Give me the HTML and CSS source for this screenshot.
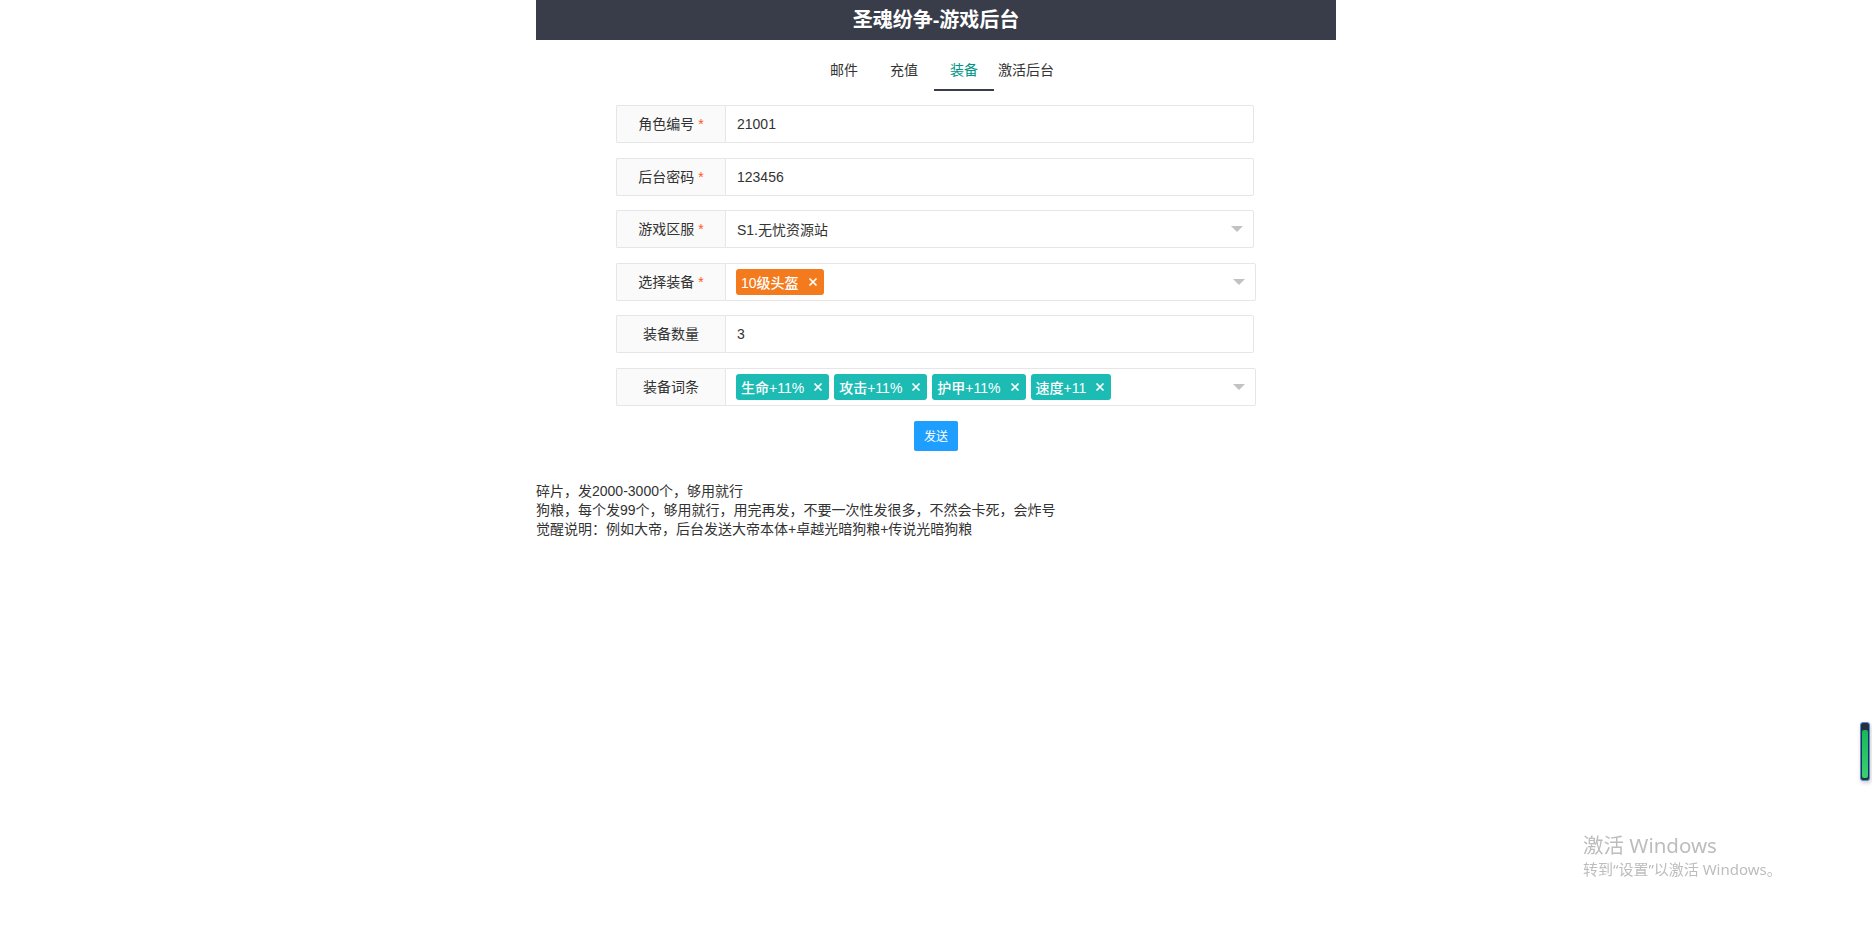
FILE: index.html
```html
<!DOCTYPE html>
<html>
<head>
  <meta charset="utf-8" />
  <title>圣魂纷争-游戏后台</title>
  <meta name="viewport" content="width=device-width, initial-scale=1.0" />
  <link rel="stylesheet" href="styles.css">
</head>
<body>
  <div class="page">
    <header class="top">圣魂纷争-游戏后台</header>

    <nav class="tabs">
      <a class="tab">邮件</a>
      <a class="tab">充值</a>
      <a class="tab active">装备</a>
      <a class="tab">激活后台</a>
    </nav>

    <form class="form" onsubmit="return false">
      <div class="form-item">
        <label class="form-label">角色编号 <span class="req">*</span></label>
        <div class="form-block"><input class="form-input" value="21001" /></div>
      </div>
      <div class="form-item">
        <label class="form-label">后台密码 <span class="req">*</span></label>
        <div class="form-block"><input class="form-input" value="123456" /></div>
      </div>
      <div class="form-item">
        <label class="form-label">游戏区服 <span class="req">*</span></label>
        <div class="form-block">
          <div class="select-box">S1.无忧资源站<i class="edge"></i></div>
        </div>
      </div>
      <div class="form-item">
        <label class="form-label">选择装备 <span class="req">*</span></label>
        <div class="form-block wide">
          <div class="select-box multi">
            <span class="tag orange">10级头盔<svg class="tag-x" viewBox="0 0 10 10"><path d="M1.5 1.5L8.5 8.5M8.5 1.5L1.5 8.5"/></svg></span>
            <i class="edge"></i>
          </div>
        </div>
      </div>
      <div class="form-item">
        <label class="form-label">装备数量</label>
        <div class="form-block"><input class="form-input" value="3" /></div>
      </div>
      <div class="form-item">
        <label class="form-label">装备词条</label>
        <div class="form-block wide">
          <div class="select-box multi">
            <span class="tag teal">生命+11%<svg class="tag-x" viewBox="0 0 10 10"><path d="M1.5 1.5L8.5 8.5M8.5 1.5L1.5 8.5"/></svg></span>
            <span class="tag teal">攻击+11%<svg class="tag-x" viewBox="0 0 10 10"><path d="M1.5 1.5L8.5 8.5M8.5 1.5L1.5 8.5"/></svg></span>
            <span class="tag teal">护甲+11%<svg class="tag-x" viewBox="0 0 10 10"><path d="M1.5 1.5L8.5 8.5M8.5 1.5L1.5 8.5"/></svg></span>
            <span class="tag teal">速度+11<svg class="tag-x" viewBox="0 0 10 10"><path d="M1.5 1.5L8.5 8.5M8.5 1.5L1.5 8.5"/></svg></span>
            <i class="edge"></i>
          </div>
        </div>
      </div>
      <div class="btn-row">
        <button type="submit" class="btn">发送</button>
      </div>
    </form>

    <div class="notes">
      碎片，发2000-3000个，够用就行<br>
      狗粮，每个发99个，够用就行，用完再发，不要一次性发很多，不然会卡死，会炸号<br>
      觉醒说明：例如大帝，后台发送大帝本体+卓越光暗狗粮+传说光暗狗粮
    </div>
  </div>

  <div class="win-mark">
    <div class="win-title">激活 Windows</div>
    <div class="win-sub">转到“设置”以激活 Windows。</div>
  </div>

  <div class="side-widget"><div class="side-fill"></div></div>
</body>
</html>
```

FILE: styles.css
```css
body { margin: 0; font-family: "Liberation Sans", "Noto Sans CJK SC", sans-serif; font-size: 14px; color: #333; background: #fff; }
.page { width: 800px; margin: 0 auto; }
.top { height: 40px; line-height: 40px; background: #393d49; color: #fff; text-align: center; font-size: 20px; font-weight: bold; }

.tabs { display: flex; justify-content: center; padding-top: 12px; }
.tab { min-width: 60px; padding: 0 4px; box-sizing: border-box; height: 39px; line-height: 37px; text-align: center; border-bottom: 2px solid transparent; cursor: pointer; }
.tab.active { color: #009688; border-bottom-color: #393d49; }

.form { width: 640px; margin: 14px auto 0; }
.form-item { display: flex; height: 38px; margin-bottom: 14.6px; }
.form-label { width: 109px; flex: none; box-sizing: border-box; border: 1px solid #e6e6e6; border-right: none; border-radius: 2px 0 0 2px; background: #fafafa; text-align: center; line-height: 36px; }
.req { color: #ff5722; }
.form-block { flex: 1; margin-right: 2px; }
.form-block.wide { margin-right: 0; }
.form-input { width: 100%; height: 38px; box-sizing: border-box; border: 1px solid #e6e6e6; border-radius: 0 2px 2px 0; padding: 0 11px; font: inherit; color: #333; outline: none; }

.select-box { height: 38px; box-sizing: border-box; border: 1px solid #e6e6e6; border-radius: 0 2px 2px 0; padding: 0 10px 0 11px; display: flex; align-items: center; }
.select-box.multi { padding-left: 10px; }
.edge { margin-left: auto; width: 0; height: 0; border-left: 6px solid transparent; border-right: 6px solid transparent; border-top: 6px solid #c2c2c2; }

.tag { display: inline-flex; align-items: center; height: 26px; padding: 0 6px 0 5px; margin-right: 5px; border-radius: 3px; color: #fff; font-weight: 500; }
.tag.orange { background: #f37b1d; }
.tag.teal { background: #1cbbb4; }
.tag-x { width: 10px; height: 10px; margin-left: 9px; stroke: #fff; stroke-width: 1.7; fill: none; }

.btn-row { text-align: center; }
.btn { height: 30px; padding: 0 10px; border: none; border-radius: 2px; background: #1e9fff; color: #fff; font: inherit; font-size: 12px; cursor: pointer; }

.notes { margin-top: 31px; line-height: 19px; }

.win-mark { position: fixed; left: 1583px; top: 832px; color: #bdbdbd; font-family: "Noto Sans", "Noto Sans CJK SC", sans-serif; }
.win-title { font-size: 20.5px; line-height: 26px; }
.win-sub { font-size: 15px; line-height: 22px; }

.side-widget { position: fixed; left: 1860px; top: 722px; width: 8px; height: 57px; border: 1px solid #4a8fe0; border-radius: 3px; background: #2b2f3a; box-shadow: 1px 2px 4px rgba(0,0,0,0.2); }
.side-fill { margin: 7px 1px 1px; height: 48px; border-radius: 2px; background: linear-gradient(#19b75a, #3bd16f); }
```
